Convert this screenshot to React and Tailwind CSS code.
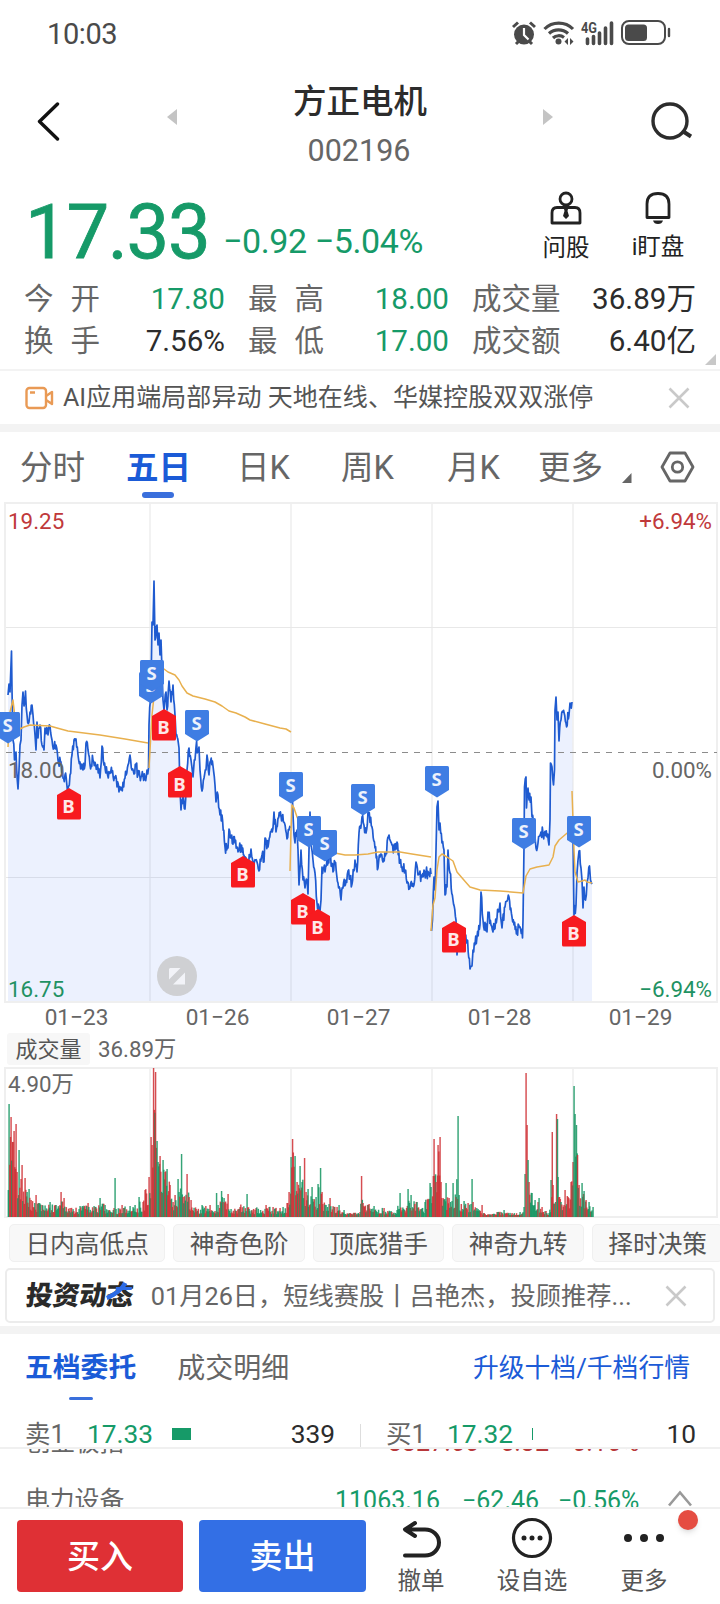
import React, { useMemo } from "react";

// Keypoints of the five day price line, one list per trading day
const PRICE = [
  [[8,695],[9,684],[10,692],[11,665],[11.5,651],[12,690],[13,740],[14.5,760],[16,752],[18,789],[19,770],[20,745],[21,740],[22,705],[23,692],[24,706],[25.5,691],[27,715],[29,722],[30,712],[32,705],[33,715],[35,735],[36,750],[37,722],[38,738],[40,725],[42,745],[44,750],[45,728],[48,735],[50,726],[52,740],[54,748],[56,745],[58,760],[61,762],[63,778],[65,775],[68,788],[70,775],[72,755],[74,740],[76,739],[78,755],[80,762],[83,770],[85,765],[86,743],[88,750],[90,765],[93,760],[97,768],[100,778],[102,746],[104,765],[107,772],[112,773],[115,778],[117,787],[121,790],[125,778],[128,765],[130,755],[132,770],[134,774],[136,764],[138,775],[141,777],[145,778],[147,770],[148.5,768]],
  [[148.500,768],[149,725],[151,690],[152,622],[153,625],[154,581],[155,640],[157,625],[158,645],[159,633],[160,655],[161,640],[162,670],[163,700],[164,710],[166,692],[167,710],[169,681],[171,702],[173,685],[175,715],[176,735],[179,748],[180,790],[181,810],[183,795],[185,809],[187,770],[189,748],[191,760],[193,777],[195,760],[196,747],[199,747],[200,770],[202,791],[204,778],[206,770],[207,755],[209,775],[210,762],[213,766],[215,785],[216,802],[218,795],[220,815],[222,815],[225,847],[228,848],[229,829],[231,838],[235,843],[238,852],[241,845],[244,855],[248,862],[251,849],[253,862],[257,862],[259,871],[262,855],[264,862],[265,838],[268,847],[271,832],[273,828],[274,812],[276,832],[278,818],[281,816],[284,822],[287,839],[289,830],[290.5,828]],
  [[291,800],[292,785],[293,815],[294,835],[295,843],[297,830],[298,850],[299,885],[301,850],[303,880],[305,888],[307,880],[308,894],[309,850],[310,812],[311,843],[313,860],[315,873],[317,903],[320,911],[321,900],[322,867],[325,872],[327,860],[330,857],[333,872],[335,862],[338,883],[341,900],[343,888],[346,880],[348,871],[352,884],[355,860],[357,872],[359,833],[362,817],[366,833],[368,812],[372,827],[375,848],[378,868],[380,857],[383,862],[386,853],[389,835],[392,845],[395,850],[397,842],[400,863],[405,870],[407,883],[410,888],[414,885],[416,862],[418,875],[422,877],[426,873],[431,874]],
  [[431.5,931],[432.5,920],[434,877],[435,890],[436,850],[437,807],[438,801],[439,830],[440,823],[442,843],[444,850],[445,895],[447,887],[448,850],[450,873],[453,900],[456,920],[457,955],[459,935],[462,930],[467,940],[470,969],[472,966],[473,950],[477,937],[480,925],[481,892],[483,920],[487,932],[488,912],[491,925],[493,932],[497,918],[500,903],[502,928],[505,907],[509,897],[512,917],[514,925],[517,930],[520,927],[522.5,938],[523,920],[524,847],[524.5,787],[526,777],[526.5,808],[528,788],[529,800],[531,797],[532,817],[534,820],[536,848],[538,843],[541,832],[543,833],[547,837],[549,845],[550,820],[550.5,763],[552,767],[553.5,785],[554.5,770],[555,710],[556,697],[557,720],[558,712],[559,741],[561,720],[563,712],[566,723],[569,715],[570,703],[572,702]],
  [[573,835],[574,915],[576,905],[577,873],[578,860],[579,851],[581,868],[582,880],[583,908],[584,887],[585.5,900],[587,882],[588,878],[589.5,866],[590.5,880],[592,884]],
];

const AVERAGES = [
  "M8 747L10 712L13 700L15 718L20 729L24 727L30 725L50 726L57 728L68 731L100 735L125 739L148 743",
  "M149 768L152 715L156 678L160 669L164 669L168 672L175 675L179 680L182 686L187 693L193 696L205 699L215 702L222 706L229 711L236 713L245 717L250 720L265 724L280 728L286 729L291 732",
  "M290 871L291 830L292 805L294 808L297 817L305 835L320 849L335 853L345 855L355 855L368 854L378 852L400 852L412 854L431 857",
  "M431 931L433 905L435 898L437 870L439 857L442 854L447 857L453 861L457 872L463 879L470 887L480 890L500 891L523 893L526 876L530 869L537 867L549 865L553 857L555 846L559 840L566 834L572 829",
  "M572 791L574 850L575 872L578 882L582 881L585 880L587 882L592 883",
];

const MARKS = [
  ["S",-4,712],["B",57,788],["S",139,672],["S",140,660],["B",152,709],["B",168,766],["S",185,710],["B",231,856],
  ["S",279,772],["S",297,816],["S",313,830],["B",291,893],["B",306,909],["S",351,784],["S",425,766],["B",442,921],
  ["S",512,818],["S",567,816],["B",562,915],
];

// x, height, colour of the outstanding bars
const VOLUME = [
  [7.5,82],[9,113,"g"],[11,100,"r"],[13,75],[14,86,"r"],[16,93,"r"],[17,45],[19,67,"g"],[21,38],[22,52,"r"],[25,39,"r"],[27,25],[29,28,"g"],[31,17],[36,22,"r"],[42,12],[50,15,"g"],[56,12],[61,25,"r"],[64,19,"r"],[70,9],[80,11,"g"],[88,14],[95,10],[100,19,"g"],[105,12],[108,7],[114,9],[115,39,"g"],[116,8],[122,12],[130,11],[135,12],[139,20,"g"],[143,15],[145,27,"r"],[149,40,"r"],[151,80,"r"],[152,72],[153.5,149,"r"],[155.5,145,"r"],[157,76,"g"],[158,55],[160,61,"r"],[163,57,"g"],[165,45,"r"],[167,48,"g"],[170,32,"r"],[173,15],[175,22],[178,38,"g"],[179,25],[181.5,63,"g"],[183,20],[187,43,"r"],[189,20],[191,17],[196,8],[202,12,"g"],[210,12],[215,6],[216.5,24,"g"],[218,12],[221.5,26,"g"],[224,19],[228,23,"r"],[231,8],[240,10],[247,23,"g"],[249,8],[256,9],[266,12,"r"],[273,10],[280,9],[287,14],[289,25],[291,60],[292.5,78,"r"],[295,61,"g"],[297,35],[300,51,"g"],[302,35],[304.5,59,"r"],[306,25],[308,28],[312,30],[316,20],[318,33],[320.5,49,"g"],[322,25],[326,12],[330,19,"r"],[334,10],[339,12,"g"],[344,7],[350,4],[360,5],[361.5,41,"r"],[363,14],[369,13,"r"],[374,11],[384,9],[391,6],[397,7],[400,24,"g"],[402,7],[408,28,"g"],[411,22],[417,15],[421,8],[425,15],[430,34,"g"],[431,30],[434,78,"r"],[436,35],[438,72,"r"],[440,80,"r"],[441,35],[446,34,"g"],[449,19],[453,34,"g"],[456,20],[458,101,"g"],[459,22],[464,16],[468,14],[471,13],[472,38,"g"],[473,15],[478,8],[482,12,"r"],[485,3],[492,3],[497,5],[504,7],[512,4],[520,5],[524,10],[525,43],[526,144,"r"],[527,92,"r"],[528,57,"g"],[529,35],[532,24],[535,17],[539,19,"g"],[542,10],[546,6],[549,4],[551,37],[552.2,85,"r"],[553,32],[555.5,15],[556.5,103,"r"],[557.4,98,"g"],[558,40],[561,15],[565,27,"r"],[568,20],[571,35],[573,55],[574,131,"g"],[575,103,"g"],[576.4,92,"g"],[577.5,62,"r"],[579,32],[582,34,"g"],[584,26],[586,17],[589,15],[593,10],
];

const random = (seed) => {
  let s = seed;
  return () => {
    s = (s * 16807) % 2147483647;
    return s / 2147483647;
  };
};

const buildDay = (points, seed) => {
  const rnd = random(seed);
  let d = "";
  points.forEach(([x, y], i) => {
    if (i > 0) {
      const [px, py] = points[i - 1];
      const steps = Math.floor((x - px) / 0.6);
      for (let k = 1; k < steps; k++) {
        const t = k / steps;
        d += `L${(px + (x - px) * t).toFixed(1)} ${(py + (y - py) * t + (rnd() - 0.5) * 12).toFixed(1)}`;
      }
    }
    d += `${i === 0 ? "" : "L"}${x} ${y}`;
  });
  return d;
};

const buildBars = () => {
  const rnd = random(97);
  const bars = [];
  for (let i = 1; i < VOLUME.length; i++) {
    const [px, ph] = VOLUME[i - 1];
    const [x, h, c] = VOLUME[i];
    for (let q = px + 0.75; q < x - 0.3; q += 0.75) {
      const base = Math.min(ph, h) + (Math.max(ph, h) - Math.min(ph, h)) * 0.25;
      const reddish = (q > 138 && q < 156) || (q > 560 && q < 573) || q < 30;
      bars.push({ x: q, h: Math.max(2, base * (0.3 + rnd() * 0.7)), c: rnd() < (reddish ? 0.72 : 0.5) ? "r" : "g" });
    }
    bars.push({ x, h, c: c || (rnd() < 0.5 ? "r" : "g") });
  }
  return bars;
};

const Mark = ({ type, x, y }) => (
  <g transform={`translate(${x} ${y})`}>
    {type === "S" ? (
      <path d="M1.5 0H22.5Q24 0 24 1.5V24L12 31.5L0 24V1.5Q0 0 1.5 0Z" fill="#3f7de3" />
    ) : (
      <path d="M12 0L24 7V30Q24 31.5 22.5 31.5H1.5Q0 31.5 0 30V7Z" fill="#f71a1f" />
    )}
    <text x="11.5" y={type === "S" ? 20 : 24.5} textAnchor="middle" fontSize="18.5" fontWeight="700" fill="#fff" opacity="0.9" fontFamily="Open Sans, sans-serif">
      {type}
    </text>
  </g>
);

const PriceChart = () => {
  const days = useMemo(() => PRICE.map((points, i) => buildDay(points, 41 + i)), []);
  return (
    <div className="relative h-[502px] shrink-0">
      <svg className="block" width="720" height="502" viewBox="0 501 720 502">
        <g fill="none" stroke="#efefef" strokeWidth="2">
          <rect x="5" y="503" width="712" height="499" />
          <path d="M150 503V1002M291 503V1002M432 503V1002M573 503V1002" strokeWidth="1.6" />
          <path d="M6 627.5H717M6 877.5H717" stroke="#e8e8e8" strokeWidth="1" />
        </g>
        <path d={`M${days.join("L")}V1001H8Z`} fill="#2a66f5" fillOpacity="0.09" />
        <path d="M6 752.5H717" stroke="#8c8c8c" strokeWidth="1" strokeDasharray="6 6" />
        {days.map((d, i) => (
          <path key={i} d={`M${d}`} fill="none" stroke="#1f5bd0" strokeWidth="1.7" strokeLinejoin="round" />
        ))}
        <g fill="none" stroke="#e8b04e" strokeWidth="1.5" strokeLinejoin="round">
          {AVERAGES.map((d) => (
            <path key={d} d={d} />
          ))}
        </g>
        {MARKS.map(([type, x, y]) => (
          <Mark key={`${x}-${y}`} type={type} x={x} y={y} />
        ))}
        <circle cx="177" cy="976" r="20" fill="#cfd0d3" />
        <path d="M170 968H180.5L169 979.5V969ZM185 972.5V984.5H173Z" fill="#f2f3f8" />
      </svg>
      <div className="absolute inset-0 pl-[8px] pr-[8px] text-[22.4px] leading-[28px]">
        <div className="flex justify-between pt-[6px] text-[#c0393b]">
          <span>19.25</span>
          <span>+6.94%</span>
        </div>
        <div className="flex justify-between pt-[221px] text-[#666]">
          <span>18.00</span>
          <span>0.00%</span>
        </div>
        <div className="flex justify-between pt-[191px] text-[#1f9263]">
          <span>16.75</span>
          <span>−6.94%</span>
        </div>
      </div>
    </div>
  );
};

const VolumeChart = () => {
  const bars = useMemo(buildBars, []);
  return (
    <div className="relative h-[152px] shrink-0">
      <svg className="block" width="720" height="152" viewBox="0 1067 720 152">
        <g fill="none" stroke="#efefef" strokeWidth="2">
          <rect x="5" y="1068" width="712" height="149" />
          <path d="M150 1068V1217M291 1068V1217M432 1068V1217M573 1068V1217" strokeWidth="1.6" />
        </g>
        {bars.map((b, i) => (
          <rect key={i} x={b.x - 0.65} y={1217 - b.h} width="1.45" height={b.h} fill={b.c === "r" ? "#cf2e33" : "#12945f"} opacity="0.85" />
        ))}
      </svg>
      <span className="absolute left-[8px] top-[2px] text-[22.300px] leading-[30px] text-[#666]">4.90万</span>
    </div>
  );
};

const CloseIcon = () => (
  <svg className="shrink-0" width="22" height="22" viewBox="0 0 22 22" fill="none" stroke="#c9c9c9" strokeWidth="2.6">
    <path d="M1.5 1.5L20.5 20.5M20.5 1.5L1.5 20.5" />
  </svg>
);

const StatusBar = () => (
  <div className="flex h-[66px] shrink-0 items-center justify-between pl-[47px] pr-[49px]">
    <span className="pt-[3px] text-[29px] text-[#4a4a4a] tracking-[-0.400px]">10:03</span>
    <svg width="160" height="26" viewBox="511 19 160 26" fill="none" stroke="#4a4a4a">
      <circle cx="524" cy="33.5" r="10" fill="#4a4a4a" stroke="none" />
      <path d="M513 26L518 21.5M535 26L530 21.5M516 43L519 40M532 43L529 40" strokeWidth="3" />
      <path d="M524 27V34L528.5 38.5" stroke="#fff" strokeWidth="2.2" />
      <path d="M544.5 28A20 20 0 0 1 573 28M549 32.5A14 14 0 0 1 568 32.5M553 37A8.5 8.5 0 0 1 564 36.5" strokeWidth="3.2" />
      <circle cx="558.5" cy="40.5" r="3" fill="#4a4a4a" stroke="none" />
      <path d="M568 37L564.5 40.5L568 44ZM570 37L573.5 40.5L570 44Z" fill="#4a4a4a" stroke="none" />
      <text x="581" y="32" fontSize="14" fontWeight="700" fill="#4a4a4a" stroke="none" fontFamily="Roboto, sans-serif" textLength="16" lengthAdjust="spacingAndGlyphs">4G</text>
      <path d="M587.5 38V42.5M593.5 35.5V42.5M599.5 32V42.5M605.5 27V42.5M611.5 22V42.5" strokeWidth="3.6" strokeLinecap="round" />
      <rect x="622" y="20" width="43" height="23" rx="7" strokeWidth="2" />
      <rect x="625" y="23.5" width="22" height="16.5" rx="3.5" fill="#4a4a4a" stroke="none" />
      <path d="M669 28V35" strokeWidth="2.4" strokeLinecap="round" />
    </svg>
  </div>
);

const Header = () => (
  <div className="flex h-[110px] shrink-0 items-start pl-[36px] pr-[27px]">
    <svg className="mt-[35px]" width="26" height="40" viewBox="36 101 26 40" fill="none" stroke="#111" strokeWidth="3.4" strokeLinecap="round" strokeLinejoin="round">
      <path d="M57.5 104L39.500 121.500L57.5 139" />
    </svg>
    <svg className="ml-[104px] mt-[42px]" width="11" height="18" viewBox="0 0 11 18">
      <path d="M11 1V17L1 9Z" fill="#c4c4c4" />
    </svg>
    <div className="ml-[33px] flex w-[300px] flex-col items-center pt-[12px]">
      <h1 className="text-[33.500px] leading-[48px] font-medium text-[#2c2c2c]">方正电机</h1>
      <span className="mt-[7px] mr-[2px] text-[30.500px] leading-[36px] text-[#666]">002196</span>
    </div>
    <svg className="ml-[33px] mt-[42px]" width="11" height="18" viewBox="0 0 11 18">
      <path d="M0 1V17L10 9Z" fill="#c4c4c4" />
    </svg>
    <svg className="ml-auto mt-[35px]" width="42" height="42" viewBox="651 101 42 42" fill="none" stroke="#2c2c2c" strokeWidth="3.400">
      <circle cx="670" cy="121" r="17" />
      <path d="M682.500 131L691 136.500" strokeWidth="4" />
    </svg>
  </div>
);

const Stat = ({ label, value, green }) => (
  <div className="flex items-center justify-between">
    <span className="-ml-px text-[29.500px] text-[#666]">{label}</span>
    <span className={green ? "text-[29.600px] text-[#169a68]" : "text-[29.600px] text-[#2c2c2c]"}>{value}</span>
  </div>
);

const Gap = () => <span className="inline-block w-[17px]" />;

const Quote = () => (
  <div className="h-[193px] shrink-0">
    <div className="flex h-[102px] items-start">
      <span className="ml-[25px] mt-[10px] w-[198px] text-[76px] leading-[92px] tracking-[-1.300px] text-[#169a68] [-webkit-text-stroke:0.8px_#169a68]">17.33</span>
      <span className="mt-[45px] w-[310px] text-[34px] leading-[40px] tracking-[-0.400px] text-[#169a68]">−0.92 −5.04%</span>
      <div className="mt-[15px] flex w-[66px] flex-col items-center">
        <svg width="32" height="34" viewBox="0 0 32 34" fill="none" stroke="#222" strokeWidth="2.8">
          <circle cx="16" cy="8" r="6" />
          <path d="M7 16.500H25Q30 16.500 30 22V32H2V22Q2 16.500 7 16.500Z" strokeLinejoin="round" />
          <path d="M14 18H18L17.500 20L19 25L16 28L13 25L14.500 20Z" fill="#222" stroke="none" />
        </svg>
        <span className="mt-[7px] text-[23.500px] leading-[32px] text-[#222]">问股</span>
      </div>
      <div className="ml-[26px] mt-[15px] flex w-[66px] flex-col items-center">
        <svg width="32" height="34" viewBox="0 0 32 34" fill="none" stroke="#222" strokeWidth="2.8">
          <path d="M5 26.500V13Q5 2.500 16 2.500Q27 2.500 27 13V26.500Z" strokeLinejoin="round" />
          <path d="M11 29.500H21Q20 33 16 33Q12 33 11 29.500Z" fill="#222" stroke="none" />
        </svg>
        <span className="mt-[7px] text-[23.500px] leading-[30px] text-[#222]">i盯盘</span>
      </div>
    </div>
    <div className="relative grid h-[91px] auto-rows-[42px] grid-cols-[200px_200px_223px] gap-x-[24px] pl-[25px] leading-[42px]">
      <Stat label={<>今<Gap />开</>} value="17.80" green />
      <Stat label={<>最<Gap />高</>} value="18.00" green />
      <Stat label="成交量" value="36.89万" />
      <Stat label={<>换<Gap />手</>} value="7.56%" />
      <Stat label={<>最<Gap />低</>} value="17.00" green />
      <Stat label="成交额" value="6.40亿" />
      <svg className="absolute right-[4px] bottom-[4px]" width="11" height="11" viewBox="0 0 11 11">
        <path d="M11 0V11H0Z" fill="#c8c8c8" />
      </svg>
    </div>
  </div>
);

const NewsLine = () => (
  <div className="flex h-[63px] shrink-0 items-center border-t-2 border-b-8 border-[#f3f3f3] pl-[25px] pr-[30px]">
    <svg width="29" height="24" viewBox="0 0 29 24" fill="none" stroke="#e99a55" strokeWidth="2.4" strokeLinejoin="round">
      <rect x="1.500" y="2" width="19.500" height="20" rx="3" />
      <path d="M21 10L27 6V18L21 14M5 6.500H10" />
    </svg>
    <span className="ml-[9px] flex-1 text-[25.050px] leading-[36px] whitespace-nowrap text-[#555]">AI应用端局部异动 天地在线、华媒控股双双涨停</span>
    <CloseIcon />
  </div>
);

const PeriodTabs = () => (
  <div className="flex h-[69px] shrink-0 text-[32.500px] leading-[73px] text-[#666]">
    <span className="ml-[20px] w-[106px]">分时</span>
    <span className="relative w-[111px] font-bold text-[#1b5bd7]">
      五日
      <i className="absolute left-[16px] bottom-[3px] h-[6px] w-[32px] rounded-full bg-[#3a6fdc]" />
    </span>
    <span className="w-[104px]">日K</span>
    <span className="w-[106px]">周K</span>
    <span className="w-[91px]">月K</span>
    <span className="w-[84px]">更多</span>
    <svg className="mt-[41px]" width="10" height="10" viewBox="0 0 10 10">
      <path d="M9.500 0V10H0Z" fill="#666" />
    </svg>
    <svg className="ml-[28px] mt-[18px]" width="35" height="34" viewBox="0 0 35 34" fill="none" stroke="#666" strokeWidth="2.800">
      <path d="M10 3H25L33 17L25 31H10L2 17Z" strokeLinejoin="round" />
      <circle cx="17.500" cy="17" r="5.200" />
    </svg>
  </div>
);

const DATES = ["01−23", "01−26", "01−27", "01−28", "01−29"];

const CHIPS = ["日内高低点", "神奇色阶", "顶底猎手", "神奇九转", "择时决策"];

const Promo = () => (
  <div className="mx-[5px] mt-[6px] flex h-[55px] shrink-0 items-center rounded-[5px] border-2 border-[#ececec] pl-[19px] pr-[26px]">
    <span className="relative -skew-x-[6deg] text-[27px] leading-[40px] font-black tracking-[-0.300px] text-[#2a2a2a]">
      投资动态
      <svg className="absolute -right-px top-[6px]" width="29" height="18" viewBox="0 0 29 18" fill="none" stroke="#2c6be6">
        <path d="M19 1Q15 10 2 16" strokeWidth="4.5" />
        <path d="M10 6.500H26" strokeWidth="3" />
      </svg>
    </span>
    <span className="ml-[18px] flex-1 pt-[2px] text-[25.250px] whitespace-nowrap text-[#666]">01月26日，短线赛股丨吕艳杰，投顾推荐...</span>
    <CloseIcon />
  </div>
);

const OrderBook = () => (
  <div className="h-[115px] shrink-0 border-b-2 border-[#f0f0f0]">
    <div className="flex h-[67px] items-center pl-[25px] pr-[30px]">
      <span className="relative pt-px text-[27.800px] leading-[64px] font-bold text-[#1b5bd7]">
        五档委托
        <i className="absolute left-[44px] bottom-0 h-[3px] w-[24px] rounded-full bg-[#3a6fdc]" />
      </span>
      <span className="ml-[41px] flex-1 pt-[2px] text-[28px] text-[#666]">成交明细</span>
      <span className="pt-[2px] text-[25.800px] text-[#1b5bd7]">升级十档/千档行情</span>
    </div>
    <div className="flex h-[46px] items-end pl-[25px] pr-[24px] text-[26.300px] leading-[26px] text-[#666]">
      <span className="w-[62px] text-[25.500px]">卖1</span>
      <span className="w-[85px] text-[#169a68]">17.33</span>
      <i className="mb-[7px] h-[12px] w-[19px] bg-[#169a68]" />
      <span className="w-[144px] text-right text-[#2c2c2c]">339</span>
      <i className="ml-[25px] h-[23px] w-px bg-[#ddd]" />
      <span className="ml-[25px] w-[61px] text-[25.500px]">买1</span>
      <span className="w-[85px] text-[#169a68]">17.32</span>
      <i className="mb-[7px] h-[12px] w-px bg-[#169a68]" />
      <span className="flex-1 text-right text-[#2c2c2c]">10</span>
    </div>
  </div>
);

const IndexRows = () => (
  <div className="flex h-[58px] shrink-0 flex-col overflow-hidden text-[25px] leading-[36px] text-[#666]">
    <div className="-mt-[24px] flex h-[36px] shrink-0 pl-[26px] text-[#b8383a]">
      <span className="w-[362px] text-[24.500px] text-[#666]">创业板指</span>
      <span className="w-[98px]">3327.66</span>
      <span className="w-[72px]">+5.32</span>
      <span>+0.16%</span>
    </div>
    <div className="mt-[16px] flex h-[48px] shrink-0 items-center pl-[25px] pr-[28px] text-[25px] text-[#169a68]">
      <span className="w-[310px] text-[24.800px] text-[#666]">电力设备</span>
      <span className="w-[127px]">11063.16</span>
      <span className="w-[96px]">−62.46</span>
      <span className="flex-1">−0.56%</span>
      <svg className="-mt-[6px]" width="24" height="17" viewBox="0 0 24 17" fill="none" stroke="#999" strokeWidth="2.600">
        <path d="M1 15.500L12 2.500L23 15.500" />
      </svg>
    </div>
  </div>
);

const BottomBar = () => (
  <div className="relative flex flex-1 border-t-2 border-[#f0f0f0] pl-[17px] pt-[11px] text-[23.500px] leading-[30px] text-[#555]">
    <button className="h-[72px] w-[166px] rounded-[4px] bg-[#df3035] pt-[2px] text-[33px] font-medium text-white">买入</button>
    <button className="ml-[16px] h-[72px] w-[167px] rounded-[4px] bg-[#336fe5] pt-[2px] text-[33px] font-medium text-white">卖出</button>
    <div className="ml-[24px] flex w-[62px] flex-col items-center">
      <svg width="40" height="40" viewBox="401 1519 40 40" fill="none" stroke="#222" strokeWidth="4" strokeLinecap="round" strokeLinejoin="round">
        <path d="M415 1522L405 1528.500L415 1535M406 1528.500H425A14 13 0 0 1 425 1554.500H405" />
      </svg>
      <span className="mt-[6px] whitespace-nowrap">撤单</span>
    </div>
    <div className="ml-[44px] flex w-[72px] flex-col items-center">
      <svg width="42" height="42" viewBox="0 0 42 42" className="-mt-[3px]">
        <circle cx="21" cy="21" r="18.500" fill="none" stroke="#222" strokeWidth="3.200" />
        <path d="M13 21H13.010M21 21H21.010M29 21H29.010" stroke="#222" strokeWidth="5" strokeLinecap="round" />
      </svg>
      <span className="mt-[7px] whitespace-nowrap">设自选</span>
    </div>
    <div className="ml-[44px] flex w-[64px] flex-col items-center">
      <svg width="42" height="42" viewBox="0 0 42 42" className="-mt-[3px]">
        <path d="M5 21H5.010M21 21H21.010M37 21H37.010" stroke="#222" strokeWidth="8" strokeLinecap="round" />
      </svg>
      <span className="mt-[7px] whitespace-nowrap">更多</span>
    </div>
    <i className="absolute left-[678px] top-[1px] size-[20px] rounded-full bg-[#e54d42] shadow-md" />
  </div>
);

const App = () => (
  <div className="flex h-[1604px] w-[720px] flex-col overflow-hidden bg-white font-['Roboto','Noto_Sans_CJK_SC',sans-serif]">
    <StatusBar />
    <Header />
    <Quote />
    <NewsLine />
    <PeriodTabs />
    <PriceChart />
    <div className="flex h-[28px] shrink-0 pl-[3px] text-[22.600px] leading-[29px] text-[#666]">
      {DATES.map((date) => (
        <span key={date} className="ml-[6px] w-[135px] text-center">{date}</span>
      ))}
    </div>
    <div className="flex h-[36px] shrink-0 items-center pl-[7px] text-[22px] leading-[33px] text-[#555]">
      <span className="h-[32px] w-[83px] rounded-[3px] bg-[#f7f7f7] text-center">成交量</span>
      <span className="ml-[8px] text-[22.300px] text-[#666]">36.89万</span>
    </div>
    <VolumeChart />
    <div className="flex shrink-0 gap-[8px] pl-[9px] pt-[5px]">
      {CHIPS.map((chip) => (
        <span key={chip} className="h-[38px] shrink-0 rounded-[5px] border border-[#f0f0f0] bg-[#f8f8f8] px-[15.400px] text-[24.700px] leading-[39px] text-[#555]">{chip}</span>
      ))}
    </div>
    <Promo />
    <div className="mt-[3px] h-[8px] shrink-0 bg-[#f3f3f3]" />
    <OrderBook />
    <IndexRows />
    <BottomBar />
  </div>
);

export default App;
